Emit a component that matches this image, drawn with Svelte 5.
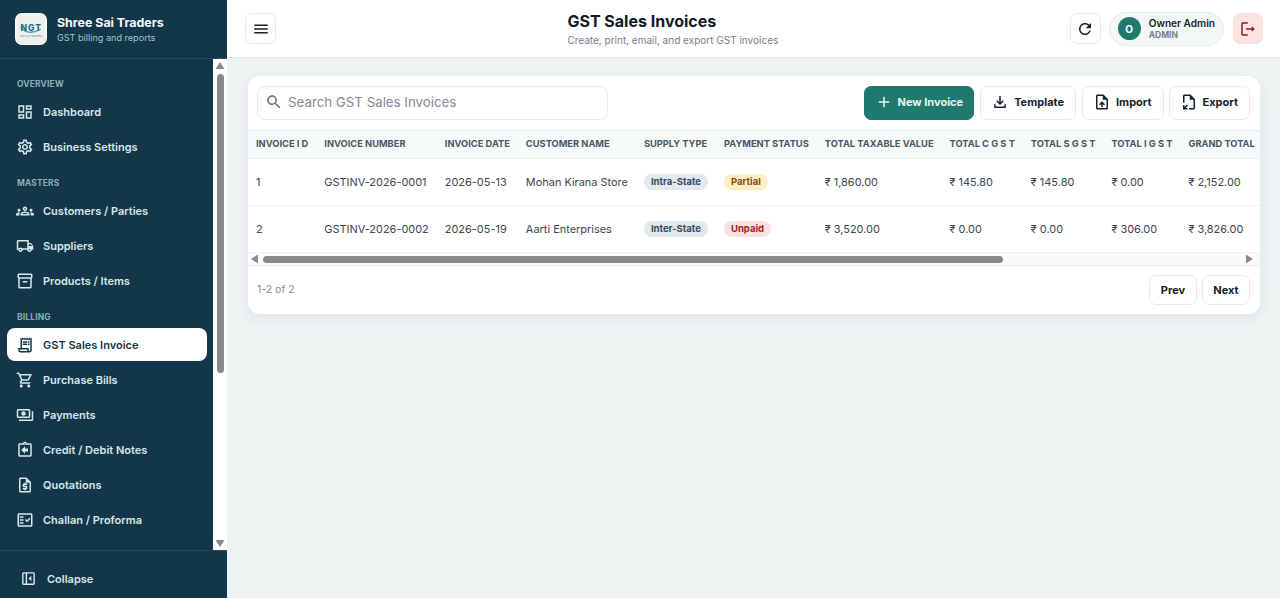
<script>
  const icons = {
    dashboard: 'M19 5v2h-4V5h4M9 5v6H5V5h4m10 8v6h-4v-6h4M9 17v2H5v-2h4M21 3h-8v6h8V3zM11 3H3v10h8V3zm10 8h-8v10h8V11zm-10 4H3v6h8v-6z',
    settings: 'M19.43 12.98c.04-.32.07-.64.07-.98 0-.34-.03-.66-.07-.98l2.11-1.65c.19-.15.24-.42.12-.64l-2-3.46c-.09-.16-.26-.25-.44-.25-.06 0-.12.01-.17.03l-2.49 1c-.52-.4-1.08-.73-1.69-.98l-.38-2.65C14.46 2.18 14.25 2 14 2h-4c-.25 0-.46.18-.49.42l-.38 2.65c-.61.25-1.17.59-1.69.98l-2.49-1c-.06-.02-.12-.03-.18-.03-.17 0-.34.09-.43.25l-2 3.46c-.13.22-.07.49.12.64l2.11 1.65c-.04.32-.07.65-.07.98 0 .33.03.66.07.98l-2.11 1.65c-.19.15-.24.42-.12.64l2 3.46c.09.16.26.25.44.25.06 0 .12-.01.17-.03l2.49-1c.52.4 1.08.73 1.69.98l.38 2.65c.03.24.24.42.49.42h4c.25 0 .46-.18.49-.42l.38-2.65c.61-.25 1.17-.59 1.69-.98l2.49 1c.06.02.12.03.18.03.17 0 .34-.09.43-.25l2-3.46c.12-.22.07-.49-.12-.64l-2.11-1.65zm-1.98-1.71c.04.31.05.52.05.73 0 .21-.02.43-.05.73l-.14 1.13.89.7 1.08.84-.7 1.21-1.27-.51-1.04-.42-.9.68c-.43.32-.84.56-1.25.73l-1.06.43-.16 1.13-.2 1.35h-1.4l-.19-1.35-.16-1.13-1.06-.43c-.43-.18-.83-.41-1.23-.71l-.91-.7-1.06.43-1.27.51-.7-1.21 1.08-.84.89-.7-.14-1.13c-.03-.31-.05-.54-.05-.74s.02-.43.05-.73l.14-1.13-.89-.7-1.08-.84.7-1.21 1.27.51 1.04.42.9-.68c.43-.32.84-.56 1.25-.73l1.06-.43.16-1.13.2-1.35h1.39l.19 1.35.16 1.13 1.06.43c.43.18.83.41 1.23.71l.91.7 1.06-.43 1.27-.51.7 1.21-1.07.85-.89.7.14 1.13zM12 8c-2.21 0-4 1.79-4 4s1.79 4 4 4 4-1.79 4-4-1.79-4-4-4zm0 6c-1.1 0-2-.9-2-2s.9-2 2-2 2 .9 2 2-.9 2-2 2z',
    groups: 'M4 13c1.1 0 2-.9 2-2s-.9-2-2-2-2 .9-2 2 .9 2 2 2zm1.13 1.1c-.37-.06-.74-.1-1.13-.1-.99 0-1.93.21-2.78.58C.48 14.9 0 15.62 0 16.43V18h4.5v-1.61c0-.83.23-1.61.63-2.29zM20 13c1.1 0 2-.9 2-2s-.9-2-2-2-2 .9-2 2 .9 2 2 2zm4 3.43c0-.81-.48-1.53-1.22-1.85-.85-.37-1.79-.58-2.78-.58-.39 0-.76.04-1.13.1.4.68.63 1.46.63 2.29V18H24v-1.57zm-7.76-2.78C15.07 13.14 13.63 12.75 12 12.75c-1.63 0-3.07.39-4.24.9C6.68 14.13 6 15.21 6 16.39V18h12v-1.61c0-1.18-.68-2.26-1.76-2.74zM8.07 16c.09-.23.13-.39.91-.69.97-.38 1.99-.56 3.02-.56s2.05.18 3.02.56c.77.3.81.46.91.69H8.07zM12 8c.55 0 1 .45 1 1s-.45 1-1 1-1-.45-1-1 .45-1 1-1m0-2c-1.66 0-3 1.34-3 3s1.34 3 3 3 3-1.34 3-3-1.34-3-3-3z',
    truck: 'M20 8h-3V4H3c-1.1 0-2 .9-2 2v11h2c0 1.66 1.34 3 3 3s3-1.34 3-3h6c0 1.66 1.34 3 3 3s3-1.34 3-3h2v-5l-3-4zm-.5 1.5l1.96 2.5H17V9.5h2.5zM6 18c-.55 0-1-.45-1-1s.45-1 1-1 1 .45 1 1-.45 1-1 1zm2.22-3c-.55-.61-1.33-1-2.22-1s-1.67.39-2.22 1H3V6h12v9H8.22zM18 18c-.55 0-1-.45-1-1s.45-1 1-1 1 .45 1 1-.45 1-1 1z',
    box: 'M20 2H4c-1 0-2 .9-2 2v3.01c0 .72.43 1.34 1 1.69V20c0 1.1 1.1 2 2 2h14c.9 0 2-.9 2-2V8.7c.57-.35 1-.97 1-1.69V4c0-1.1-1-2-2-2zm-1 18H5V9h14v11zm1-13H4V4h16v3zM9 12h6v2H9z',
    receipt: 'M19.5 3.5L18 2l-1.5 1.5L15 2l-1.5 1.5L12 2l-1.5 1.5L9 2 7.5 3.5 6 2v14H3v3c0 1.66 1.34 3 3 3h12c1.66 0 3-1.34 3-3V2l-1.5 1.5zM15 20H6c-.55 0-1-.45-1-1v-1h10v2zm4-1c0 .55-.45 1-1 1s-1-.45-1-1v-3H8V5h11v14zM9 7h6v2H9zM16 7h2v2h-2zM9 10h6v2H9zM16 10h2v2h-2z',
    cart: 'M15.55 13c.75 0 1.41-.41 1.75-1.03l3.58-6.49c.37-.66-.11-1.48-.87-1.48H5.21l-.94-2H1v2h2l3.6 7.59-1.35 2.44C4.52 15.37 5.48 17 7 17h12v-2H7l1.1-2h7.45zM6.16 6h12.15l-2.76 5H8.53L6.16 6zM7 18c-1.1 0-1.99.9-1.99 2S5.9 22 7 22s2-.9 2-2-.9-2-2-2zm10 0c-1.1 0-1.99.9-1.99 2s.89 2 1.99 2 2-.9 2-2-.9-2-2-2z',
    payments: 'M19 14V6c0-1.1-.9-2-2-2H3c-1.1 0-2 .9-2 2v8c0 1.1.9 2 2 2h14c1.1 0 2-.9 2-2zm-2 0H3V6h14v8zm-7-7c-1.66 0-3 1.34-3 3s1.34 3 3 3 3-1.34 3-3-1.34-3-3-3zm13 0v11c0 1.1-.9 2-2 2H4v-2h17V7h2z',
    credit: 'M19 3h-4.18C14.4 1.84 13.3 1 12 1s-2.4.84-2.82 2H5c-1.1 0-2 .9-2 2v14c0 1.1.9 2 2 2h14c1.1 0 2-.9 2-2V5c0-1.1-.9-2-2-2zm-7-.25c.41 0 .75.34.75.75s-.34.75-.75.75-.75-.34-.75-.75.34-.75.75-.75zM19 19H5V5h14v14zM16 14h-4v3l-5-5 5-5v3h4z',
    quote: 'M14 2H6c-1.1 0-1.99.9-1.99 2L4 20c0 1.1.89 2 1.99 2H18c1.1 0 2-.9 2-2V8l-6-6zM6 20V4h7v5h5v11H6zM11 19h2v-1h1c.55 0 1-.45 1-1v-3c0-.55-.45-1-1-1h-3v-1h4v-2h-2V9h-2v1h-1c-.55 0-1 .45-1 1v3c0 .55.45 1 1 1h3v1H9v2h2v1z',
    check: 'M20 3H4c-1.1 0-2 .9-2 2v14c0 1.1.9 2 2 2h16c1.1 0 2-.9 2-2V5c0-1.1-.9-2-2-2zm0 16H4V5h16v14zM19.41 10.42L17.99 9l-3.17 3.17-1.41-1.42L12 12.16 14.82 15zM5 7h5v2H5zM5 11h5v2H5zM5 15h5v2H5z',
    collapse: 'M19 3H5c-1.1 0-2 .9-2 2v14c0 1.1.9 2 2 2h14c1.1 0 2-.9 2-2V5c0-1.1-.9-2-2-2zM5 5h3v14H5V5zm14 14H10V5h9v14zM16 8v8l-4-4z',
    menu: 'M3 18h18v-2H3v2zm0-5h18v-2H3v2zm0-7v2h18V6H3z',
    refresh: 'M17.65 6.35C16.2 4.9 14.21 4 12 4c-4.42 0-7.99 3.58-7.99 8s3.57 8 7.99 8c3.73 0 6.84-2.55 7.73-6h-2.08c-.82 2.33-3.04 4-5.65 4-3.31 0-6-2.69-6-6s2.69-6 6-6c1.66 0 3.14.69 4.22 1.78L13 11h7V4l-2.35 2.35z',
    logout: 'M5 5h6c.55 0 1-.45 1-1s-.45-1-1-1H5c-1.1 0-2 .9-2 2v14c0 1.1.9 2 2 2h6c.55 0 1-.45 1-1s-.45-1-1-1H5V5zM20.65 11.65l-2.79-2.79c-.32-.32-.86-.1-.86.35V11h-7c-.55 0-1 .45-1 1s.45 1 1 1h7v1.79c0 .45.54.67.85.35l2.79-2.79c.2-.19.2-.51.01-.7z',
    search: 'M15.5 14h-.79l-.28-.27C15.41 12.59 16 11.11 16 9.5 16 5.91 13.09 3 9.5 3S3 5.91 3 9.5 5.91 16 9.5 16c1.61 0 3.09-.59 4.23-1.57l.27.28v.79l5 4.99L20.49 19l-4.99-5zm-6 0C7.01 14 5 11.99 5 9.5S7.01 5 9.5 5 14 7.01 14 9.5 11.99 14 9.5 14z',
    add: 'M19 13h-6v6h-2v-6H5v-2h6V5h2v6h6v2z',
    download: 'M18 15v3H6v-3H4v3c0 1.1.9 2 2 2h12c1.1 0 2-.9 2-2v-3h-2zm-1-4l-1.41-1.41L13 12.17V4h-2v8.17L8.41 9.59 7 11l5 5 5-5z',
    upload: 'M14 2H6c-1.1 0-1.99.9-1.99 2L4 20c0 1.1.89 1.99 1.99 2H18c1.1 0 2-.9 2-2V8l-6-6zm4 18H6V4h7v5h5v11zM8 15.01l1.41 1.41L11 14.84V19h2v-4.16l1.59 1.59L16 15.01 12.01 11 8 15.01z',
    exportf: 'M14 2H6c-1.1 0-2 .9-2 2v9h2V4h7v5h5v11h-6v2h6c1.1 0 2-.9 2-2V8l-6-6zM4 22h6v-2H7.41l3.3-3.3-1.41-1.41L6 18.59V16H4v6z'
  };

  const sections = [
    { label: 'Overview', items: [['Dashboard', 'dashboard'], ['Business Settings', 'settings']] },
    { label: 'Masters', items: [['Customers / Parties', 'groups'], ['Suppliers', 'truck'], ['Products / Items', 'box']] },
    { label: 'Billing', items: [['GST Sales Invoice', 'receipt', true], ['Purchase Bills', 'cart'], ['Payments', 'payments'], ['Credit / Debit Notes', 'credit'], ['Quotations', 'quote'], ['Challan / Proforma', 'check']] }
  ];

  const cols = ['Invoice I D', 'Invoice Number', 'Invoice Date', 'Customer Name', 'Supply Type', 'Payment Status', 'Total Taxable Value', 'Total C G S T', 'Total S G S T', 'Total I G S T', 'Grand Total'];
  const rows = [
    { id: '1', no: 'GSTINV-2026-0001', date: '2026-05-13', name: 'Mohan Kirana Store', type: 'Intra-State', status: 'Partial', st: 'partial', nums: ['₹ 1,860.00', '₹ 145.80', '₹ 145.80', '₹ 0.00', '₹ 2,152.00'] },
    { id: '2', no: 'GSTINV-2026-0002', date: '2026-05-19', name: 'Aarti Enterprises', type: 'Inter-State', status: 'Unpaid', st: 'unpaid', nums: ['₹ 3,520.00', '₹ 0.00', '₹ 0.00', '₹ 306.00', '₹ 3,826.00'] }
  ];
</script>

{#snippet icon(name, cls)}
  <svg class={cls} viewBox="0 0 24 24" fill="currentColor" aria-hidden="true"><path d={icons[name]} fill-rule="evenodd" /></svg>
{/snippet}

<div class="app">
  <aside class="sidebar">
    <div class="brand">
      <div class="logo">
        <svg viewBox="0 0 32 32" width="32" height="32" aria-hidden="true">
          <rect x="1.5" y="1.5" width="29" height="29" rx="4" fill="#eef0ec" />
          <path d="M6 14c3 6 12 7 20 2" fill="none" stroke="#3aa79a" stroke-width="1.4" />
          <text x="16.3" y="18" text-anchor="middle" font-family="Inter, sans-serif" font-size="8.6" font-weight="800" fill="#1f6f8a" letter-spacing="1">NGT</text>
          <text x="16" y="24" text-anchor="middle" font-family="Inter, sans-serif" font-size="2.4" fill="#6b7780">GST SAI TRADERS</text>
        </svg>
      </div>
      <div class="brand-text">
        <div class="brand-name">Shree Sai Traders</div>
        <div class="brand-sub">GST billing and reports</div>
      </div>
    </div>
    <div class="side-body">
      <nav class="nav">
        {#each sections as s}
          <div class="nav-label">{s.label}</div>
          {#each s.items as it}
            <a class="nav-item" class:active={it[2]} href="#top">
              {@render icon(it[1], 'nav-icon')}
              <span>{it[0]}</span>
            </a>
          {/each}
        {/each}
      </nav>
      <div class="vrail">
        <svg class="arrow" viewBox="0 0 14 14" aria-hidden="true"><path d="M7 3l4.5 7h-9z" /></svg>
        <div class="vthumb"></div>
        <svg class="arrow end" viewBox="0 0 14 14" aria-hidden="true"><path d="M7 11L2.5 4h9z" /></svg>
      </div>
    </div>
    <div class="side-foot">
      <button class="collapse">
        {@render icon('collapse', 'collapse-icon')}
        <span>Collapse</span>
      </button>
    </div>
  </aside>

  <div class="main">
    <header class="topbar">
      <button class="icon-btn">{@render icon('menu', 'ib')}</button>
      <div class="title">
        <h1>GST Sales Invoices</h1>
        <p>Create, print, email, and export GST invoices</p>
      </div>
      <div class="top-right">
        <button class="icon-btn">{@render icon('refresh', 'ib')}</button>
        <div class="user">
          <div class="avatar">O</div>
          <div class="user-text">
            <div class="user-name">Owner Admin</div>
            <div class="user-role">ADMIN</div>
          </div>
        </div>
        <button class="icon-btn danger">{@render icon('logout', 'ib')}</button>
      </div>
    </header>

    <main class="content">
      <section class="card">
        <div class="toolbar">
          <label class="search">
            {@render icon('search', 'search-icon')}
            <input placeholder="Search GST Sales Invoices" />
          </label>
          <div class="actions">
            <button class="btn primary">{@render icon('add', 'bi')}New Invoice</button>
            <button class="btn">{@render icon('download', 'bi')}Template</button>
            <button class="btn">{@render icon('upload', 'bi')}Import</button>
            <button class="btn last">{@render icon('exportf', 'bi')}Export</button>
          </div>
        </div>
        <div class="table-wrap">
          <table>
            <thead>
              <tr>
                {#each cols as c}<th>{c}</th>{/each}
              </tr>
            </thead>
            <tbody>
              {#each rows as r}
                <tr>
                  <td>{r.id}</td>
                  <td>{r.no}</td>
                  <td>{r.date}</td>
                  <td>{r.name}</td>
                  <td><span class="pill type">{r.type}</span></td>
                  <td><span class="pill {r.st}">{r.status}</span></td>
                  {#each r.nums as n}<td>{n}</td>{/each}
                </tr>
              {/each}
            </tbody>
          </table>
        </div>
        <div class="hrail">
          <svg class="arrow" viewBox="0 0 14 14" aria-hidden="true"><path d="M3 7l7-4.5v9z" /></svg>
          <div class="hthumb"></div>
          <svg class="arrow end" viewBox="0 0 14 14" aria-hidden="true"><path d="M11 7L4 2.5v9z" /></svg>
        </div>
        <div class="pager">
          <span class="count">1-2 of 2</span>
          <div class="pager-btns">
            <button class="pbtn">Prev</button>
            <button class="pbtn">Next</button>
          </div>
        </div>
      </section>
    </main>
  </div>
</div>

<style>
  :global(body) {
    margin: 0;
    font-family: Inter, "Noto Sans", sans-serif;
    background: #eef4f4;
  }
  .app {
    display: flex;
    height: 598px;
    overflow: hidden;
  }
  .sidebar {
    width: 227px;
    flex: none;
    display: flex;
    flex-direction: column;
    background: #14364a;
    color: #d5e8ea;
  }
  .brand {
    height: 59px;
    flex: none;
    box-sizing: border-box;
    display: flex;
    align-items: center;
    gap: 10px;
    padding-left: 15px;
    border-bottom: 1px solid #2a4a5c;
  }
  .logo {
    width: 32px;
    height: 32px;
    border-radius: 7px;
    overflow: hidden;
    background: #fff;
  }
  .logo svg { display: block; }
  .brand-text { padding-top: 1px; }
  .brand-name {
    font-size: 12.4px;
    font-weight: 700;
    color: #f7fbfb;
    line-height: 16px;
  }
  .brand-sub {
    font-size: 9.1px;
    color: #9cc8c8;
    line-height: 14px;
  }
  .side-body {
    flex: 1;
    min-height: 0;
    display: flex;
  }
  .nav {
    flex: 1;
    min-width: 0;
    overflow: hidden;
    padding: 7px 6px 0 7px;
  }
  .nav-label {
    font-size: 8.4px;
    font-weight: 700;
    line-height: 12px;
    letter-spacing: 0.2px;
    color: #8ab0b5;
    text-transform: uppercase;
    padding: 12px 0 5px 10px;
  }
  .nav-item {
    height: 33px;
    margin-bottom: 2px;
    display: flex;
    align-items: center;
    gap: 9px;
    padding-left: 9px;
    border-radius: 8px;
    color: #d5e8ea;
    font-size: 11px;
    font-weight: 600;
    text-decoration: none;
  }
  .nav-item.active {
    background: #fff;
    color: #14364a;
  }
  :global(.nav-icon) {
    width: 18px;
    height: 18px;
    flex: none;
  }
  :global(.collapse-icon) {
    width: 17px;
    height: 17px;
    flex: none;
  }
  .vrail {
    width: 14px;
    flex: none;
    background: #fff;
    display: flex;
    flex-direction: column;
    align-items: center;
  }
  .arrow {
    width: 14px;
    height: 14px;
    flex: none;
    fill: #8a8a8a;
  }
  .arrow.end { margin-top: auto; }
  .vthumb {
    width: 7px;
    height: 299px;
    margin-top: 1px;
    background: #8a8a8a;
    border-radius: 4px;
  }
  .side-foot {
    flex: none;
    height: 48px;
    box-sizing: border-box;
    border-top: 1px solid #2a4a5c;
    padding: 11px 7px 0;
  }
  .collapse {
    all: unset;
    height: 33px;
    display: flex;
    align-items: center;
    gap: 10px;
    padding-left: 13px;
    color: #d5e8ea;
    font-size: 11px;
    font-weight: 600;
  }
  .main {
    flex: 1;
    min-width: 0;
    display: flex;
    flex-direction: column;
  }
  .topbar {
    height: 58px;
    flex: none;
    box-sizing: border-box;
    background: #fff;
    border-bottom: 1px solid #e2e8ec;
    display: flex;
    align-items: center;
    justify-content: space-between;
    padding: 0 17px 0 18px;
  }
  .icon-btn {
    width: 31px;
    height: 31px;
    padding: 0;
    display: flex;
    align-items: center;
    justify-content: center;
    background: #fff;
    border: 1px solid #e6ebef;
    border-radius: 7px;
    color: #15212b;
  }
  .icon-btn.danger {
    width: 30px;
    margin-left: 1px;
    background: #fde2e2;
    border-color: #fbdcdc;
    color: #8a1f24;
  }
  :global(.ib) { width: 18px; height: 18px; }
  .title h1 {
    margin: 0;
    font-size: 16px;
    line-height: 22px;
    font-weight: 700;
    color: #101a24;
  }
  .title p {
    margin: 1px 0 0;
    font-size: 10px;
    line-height: 14px;
    color: #74808c;
  }
  .top-right {
    display: flex;
    align-items: center;
    gap: 8px;
  }
  .user {
    height: 34px;
    box-sizing: border-box;
    display: flex;
    align-items: center;
    gap: 8px;
    padding: 0 8px;
    background: #f2f7f7;
    border: 1px solid #e3ecee;
    border-radius: 17px;
  }
  .avatar {
    width: 23px;
    height: 23px;
    border-radius: 50%;
    background: #1f7a6d;
    color: #fff;
    font-size: 10px;
    font-weight: 700;
    display: flex;
    align-items: center;
    justify-content: center;
  }
  .user-name {
    font-size: 10.1px;
    font-weight: 600;
    line-height: 13px;
    color: #15212b;
  }
  .user-role {
    font-size: 8.5px;
    font-weight: 700;
    line-height: 11px;
    color: #74808c;
  }
  .content {
    flex: 1;
    min-height: 0;
    padding: 18px 20px 0 21px;
  }
  .card {
    background: #fff;
    border-radius: 12px;
    box-shadow: 0 4px 14px rgba(20, 54, 74, 0.08);
    overflow: hidden;
  }
  .toolbar {
    display: flex;
    align-items: center;
    justify-content: space-between;
    padding: 10px 10px 10px 9px;
  }
  .search {
    width: 351px;
    height: 34px;
    box-sizing: border-box;
    display: flex;
    align-items: center;
    gap: 5px;
    padding: 0 7px;
    border: 1px solid #e6ebef;
    border-radius: 8px;
  }
  :global(.search-icon) { width: 18px; height: 18px; color: #66727e; flex: none; margin-bottom: 2px; }
  .search input {
    border: 0;
    outline: 0;
    flex: 1;
    min-width: 0;
    padding: 0 0 2px;
    font: 400 13.3px Inter, sans-serif;
    background: transparent;
  }
  .search input::placeholder { color: #7f8a94; opacity: 1; }
  .actions { display: flex; gap: 6px; }
  .btn {
    height: 34px;
    box-sizing: border-box;
    display: flex;
    align-items: center;
    gap: 5px;
    padding: 0 11px 2px 10px;
    background: #fff;
    border: 1px solid #e6ebef;
    border-radius: 7px;
    font: 700 11px Inter, sans-serif;
    color: #15212b;
  }
  .btn.last { margin-left: -1px; }
  .btn.primary {
    padding-right: 10px;
    background: #1f7a6d;
    border-color: #1f7a6d;
    color: #e8f6f3;
  }
  :global(.bi) { width: 18px; height: 18px; flex: none; }
  .table-wrap {
    overflow: hidden;
    border-top: 1px solid #e8eef1;
  }
  table {
    border-collapse: collapse;
    white-space: nowrap;
  }
  th {
    height: 27px;
    box-sizing: border-box;
    padding: 0 8px 2px;
    background: #f6fafb;
    border-bottom: 1px solid #e8eef1;
    text-align: left;
    text-transform: uppercase;
    font-size: 9.3px;
    font-weight: 700;
    color: #4a5763;
  }
  td {
    height: 47px;
    box-sizing: border-box;
    padding: 0 8px;
    border-bottom: 1px solid #eef2f4;
    font-size: 10.95px;
    color: #3b4650;
  }
  .pill {
    display: inline-block;
    padding: 0 7px;
    line-height: 16px;
    border-radius: 8px;
    font-size: 9.5px;
    font-weight: 700;
  }
  .pill.type { background: #e2e8f0; color: #3c4a5c; }
  .pill.partial { background: #fdf0c6; color: #8a4a10; }
  .pill.unpaid { background: #fcdfe0; color: #a11d24; }
  .hrail {
    height: 13px;
    box-sizing: border-box;
    display: flex;
    align-items: center;
    padding: 1px 4px 0 0;
    background: #f9fbfb;
    border-bottom: 1px solid #e8eef1;
  }
  .hthumb {
    width: 740px;
    height: 7px;
    margin-left: 1px;
    background: #8a8a8a;
    border-radius: 4px;
  }
  .hrail .arrow.end { margin-top: 0; margin-left: auto; }
  .pager {
    height: 48px;
    box-sizing: border-box;
    display: flex;
    align-items: center;
    justify-content: space-between;
    padding: 0 10px 0 9px;
  }
  .count { font-size: 10.5px; color: #7f8a94; }
  .pager-btns { display: flex; gap: 5px; }
  .pbtn {
    height: 30px;
    width: 48px;
    padding: 0;
    background: #fff;
    border: 1px solid #e6ebef;
    border-radius: 7px;
    font: 700 11px Inter, sans-serif;
    color: #15212b;
  }
</style>
